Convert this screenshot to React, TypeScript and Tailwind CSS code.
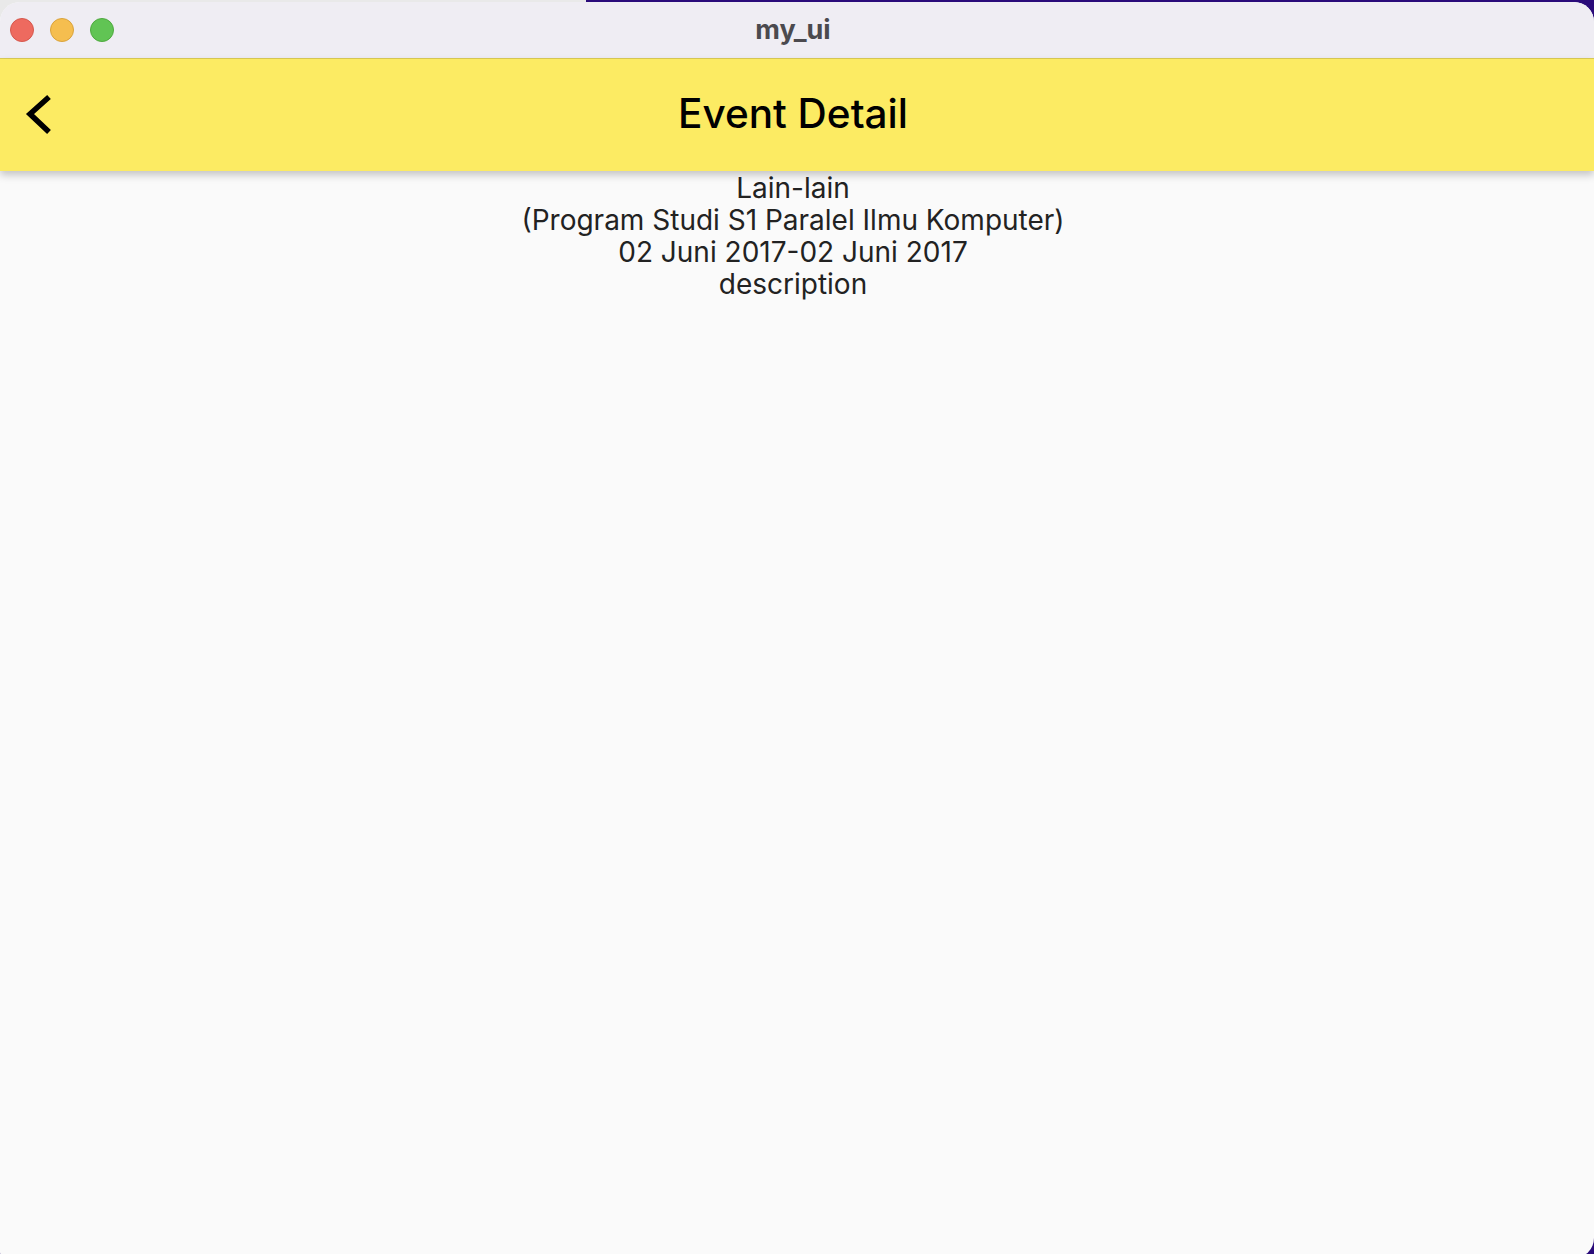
import React from "react";

export default function App() {
  return (
    <div className="relative w-[1594px] h-[1254px] overflow-hidden bg-[#2a0b7a]">
      <div className="absolute left-0 top-0 w-[586px] h-[24px] bg-[#e9e9e9]" />
      <div className="relative mt-[2px] h-[1256px] rounded-t-[20px] rounded-br-[20px] rounded-bl-[6px] overflow-hidden bg-[#fafafa] flex flex-col">
        <div className="h-[57px] shrink-0 bg-[#efedf3] border-b border-[#dccd55] flex items-center relative">
          <div className="flex items-center gap-[16px] pl-[10px]">
            <span className="block w-[24px] h-[24px] rounded-full bg-[#ee6a5f] border border-[#d5584d]" />
            <span className="block w-[24px] h-[24px] rounded-full bg-[#f5be4f] border border-[#d9a33c]" />
            <span className="block w-[24px] h-[24px] rounded-full bg-[#61c454] border border-[#4fa93f]" />
          </div>
          <div className="flex-1 flex justify-center pr-[122px]">
            <span className="text-[27px] font-bold text-[#4b4a4e] [font-family:Inter,'Noto_Sans',sans-serif] leading-none pb-[2px]">
              my_ui
            </span>
          </div>
        </div>
        <div className="h-[112px] shrink-0 bg-[#fceb63] flex items-center shadow-[0_4px_8px_rgba(0,0,0,0.22)] relative z-10">
          <div className="w-[76px] flex pl-[24px]">
            <svg width="30" height="42" viewBox="0 0 30 42">
              <polyline points="25,3 6,20 25,38" fill="none" stroke="#000" strokeWidth="5.5" strokeLinecap="butt" strokeLinejoin="miter" />
            </svg>
          </div>
          <div className="flex-1 flex justify-center pr-[84px] pb-[2px]">
            <span className="text-[40.5px] font-medium text-black [font-family:Inter,Roboto,sans-serif] leading-none">
              Event Detail
            </span>
          </div>
        </div>
        <div className="flex flex-col items-center text-[28px] leading-[32px] text-[#222] [font-family:Inter,Roboto,sans-serif] pr-[8px] pt-[1px]">
          <div>Lain-lain</div>
          <div>(Program Studi S1 Paralel Ilmu Komputer)</div>
          <div>02 Juni 2017-02 Juni 2017</div>
          <div>description</div>
        </div>
      </div>
    </div>
  );
}
